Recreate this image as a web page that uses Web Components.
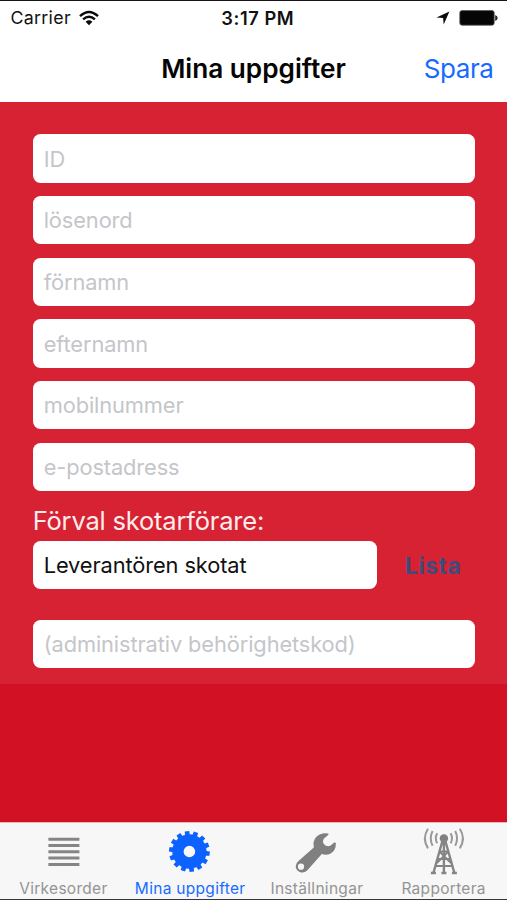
<!DOCTYPE html>
<html lang="sv">
<head>
<meta charset="utf-8">
<title>Mina uppgifter</title>
<style>
html,body{margin:0;width:507px;height:900px;overflow:hidden}
body{font-family:Inter,"Liberation Sans",sans-serif;background:#fff}
</style>
</head>
<body>
<app-screen></app-screen>
<script>
const define = (name, html) => customElements.define(name, class extends HTMLElement {
  constructor() {
    super();
    this.attachShadow({mode: 'open'}).innerHTML = html;
  }
});

define('status-bar', `
<style>
:host{display:grid;grid-template-columns:1fr auto 1fr;align-items:center;height:33px;padding:0 9px 0 10.5px;font-size:17.8px;color:#111}
.left,.right{display:flex;align-items:center}
.right{justify-content:flex-end;gap:9px}
.left{gap:8.5px}
.carrier{letter-spacing:.3px}
.time{font-weight:600;font-size:18.3px;letter-spacing:.55px;margin-left:7px}
svg{display:block}
</style>
<div class="left"><span class="carrier">Carrier</span>
<svg width="20" height="16" viewBox="0 0 20 16" fill="none" stroke="#0a0a0a" stroke-width="2.4"><path d="M1 6.1Q10 -2.3 19 6.1M4.1 9.4Q10 4 15.9 9.4"/><path d="M6.6 11.7Q10 8.9 13.4 11.7L10 15.2Z" fill="#0a0a0a" stroke="none"/></svg></div>
<span class="time">3:17 PM</span>
<div class="right"><svg width="14" height="14" viewBox="0 0 14 14"><path d="M13.4.5 7.7 13.6 7.1 7 .5 6.4Z" fill="#0a0a0a"/></svg>
<svg width="39" height="16" viewBox="0 0 39 16"><rect x=".8" y=".6" width="34.4" height="14.6" rx="2.2" fill="#050505" stroke="#555" stroke-width=".8"/><path d="M36.2 5Q38.7 6 38.7 8T36.2 11Z" fill="#222"/></svg></div>`);

define('nav-bar', `
<style>
:host{display:grid;grid-template-columns:1fr auto 1fr;align-items:center;height:70px;padding:0 13.5px;box-sizing:border-box}
.title{grid-column:2;font-size:26.2px;font-weight:600;color:#050505;letter-spacing:0;white-space:nowrap}
.action{justify-self:end;font-size:26px;letter-spacing:-.4px;color:#166aff}
</style>
<span class="title"><slot></slot></span><span class="action"><slot name="action"></slot></span>`);

define('text-field', `
<style>
:host{display:flex;align-items:center;box-sizing:border-box;height:48.3px;padding:0 11px;border-radius:7.5px;background:#fff;color:#c5c5ca;font-size:21.8px;white-space:nowrap}
:host([filled]){color:#111}
span{letter-spacing:-.1px}
</style>
<span><slot></slot></span>`);

define('profile-form', `
<style>
:host{display:block;box-sizing:border-box;height:581.5px;padding:32.2px 32px 0 32.7px;background:#d62232}
.fields{display:grid;gap:13.35px}
.label{height:50px;display:flex;align-items:center;padding-top:9px;box-sizing:border-box;color:#ffecec;font-size:25.5px;white-space:nowrap;letter-spacing:-.2px}
.row{display:grid;grid-template-columns:344.5px 1fr;align-items:center;margin-bottom:30.6px}
.list{justify-self:center;margin-left:14px;font-size:22.6px;font-weight:700;color:#3d4c7c;letter-spacing:.6px}
</style>
<div class="fields">
<text-field>ID</text-field><text-field>lösenord</text-field><text-field>förnamn</text-field><text-field>efternamn</text-field><text-field>mobilnummer</text-field><text-field>e-postadress</text-field>
</div>
<div class="label"><span>Förval skotarförare:</span></div>
<div class="row"><text-field filled>Leverantören skotat</text-field><span class="list">Lista</span></div>
<text-field>(administrativ behörighetskod)</text-field>`);

define('tab-item', `
<style>
:host{display:grid;grid-template-rows:57px 18px;justify-items:center;color:#949494;font-size:15.5px;white-space:nowrap}
:host([selected]){color:#176cff}
.icon{display:grid;place-items:start center;height:57px;width:48px}
.text{line-height:18px;letter-spacing:.3px}
</style>
<div class="icon"><slot name="icon"></slot></div><span class="text"><slot></slot></span>`);

define('tab-bar', `
<style>
:host{display:grid;grid-template-columns:repeat(4,1fr);width:507px;box-sizing:border-box;height:77px;background:#f7f7f7;border-top:1px solid #e4b9bc}
svg{display:block}
</style>
<tab-item><svg slot="icon" width="48" height="58" viewBox="0 0 48 58"><path d="M9.4 16.3h31M9.4 22.5h31M9.4 28.8h31M9.4 35.1h31M9.4 41.4h31" stroke="#858585" stroke-width="3"/></svg>Virkesorder</tab-item>
<tab-item selected><svg slot="icon" width="48" height="58" viewBox="-23.4 -28.5 48 58"><path id="gear" fill="#0b62ff" fill-rule="evenodd"/></svg>Mina uppgifter</tab-item>
<tab-item><svg slot="icon" width="48" height="58" viewBox="0 0 48 58"><path fill="#808080" fill-rule="evenodd" d="M35.2 10.6Q36 11.3 35.2 12L31 15.4Q29 18.3 31 21.3Q33.8 24.2 37.3 22.8L41.2 19.6Q42.5 19 42.9 20.3Q43 27.8 37.3 30.7Q33.3 32.6 28.8 31L14.4 47.3Q10.9 50.6 6.8 49Q2.7 46.9 2.7 43.2Q2.7 40.3 5.5 38L20.8 24.6Q19.5 18 23.4 13.8Q28.2 9 35.2 10.6ZM8 40.6A3.1 3.1 0 1 0 8 46.8 3.1 3.1 0 1 0 8 40.6Z"/></svg>Inställningar</tab-item>
<tab-item><svg slot="icon" width="48" height="58" viewBox=".6 0 48 58" fill="none" stroke="#858585"><circle cx="24.5" cy="15.5" r="4.2" fill="#808080" stroke="none"/><path stroke-width="2.4" d="M23.3 17 14 50M25.7 17 35 50M24.5 18V50"/><path stroke-width="1.8" d="M20.5 28.5h8M18.5 36h12M16.5 43h16M20.5 29l11 11M28.5 29l-11 11"/><path stroke-width="2.4" d="M11.5 50h5M22 50h5M32.5 50h5"/><path stroke-width="2" stroke="#999" d="M17.8 10.2Q15 15.3 17.8 20.3M13.2 8Q9.4 15.3 13.2 22.8M8.6 5.8Q2.3 15.5 8.6 25.4M31.2 10.2Q34 15.3 31.2 20.3M35.8 8Q39.6 15.3 35.8 22.8M40.4 5.8Q46.7 15.5 40.4 25.4"/></svg>Rapportera</tab-item>`);

define('app-screen', `
<style>
:host{display:grid;grid-template-rows:32px 69.3px 581.5px 1fr 77px;width:507px;height:900px;box-sizing:border-box;border-top:1.5px solid #171317;border-bottom:1px solid #37373a;background:#fff}
.rest{background:#d21125}
</style>
<status-bar></status-bar>
<nav-bar>Mina uppgifter<span slot="action">Spara</span></nav-bar>
<profile-form></profile-form>
<div class="rest"></div>
<tab-bar></tab-bar>`);

/* Fourteen-tooth gear with a round hub */
const tabs = document.querySelector('app-screen').shadowRoot.querySelector('tab-bar').shadowRoot;
const points = [];
for (let i = 0; i < 14; i++) {
  const a = (i * 360 / 14 + 6) * Math.PI / 180;
  for (const [r, o] of [[17.2, -.14], [20.5, -.11], [20.5, .11], [17.2, .14]])
    points.push((r * Math.cos(a + o)).toFixed(2) + ' ' + (r * Math.sin(a + o)).toFixed(2));
}
tabs.querySelector('#gear').setAttribute('d', 'M' + points.join('L') + 'ZM0-5.8A5.8 5.8 0 1 0 0 5.8A5.8 5.8 0 1 0 0-5.8Z');
</script>
</body>
</html>
